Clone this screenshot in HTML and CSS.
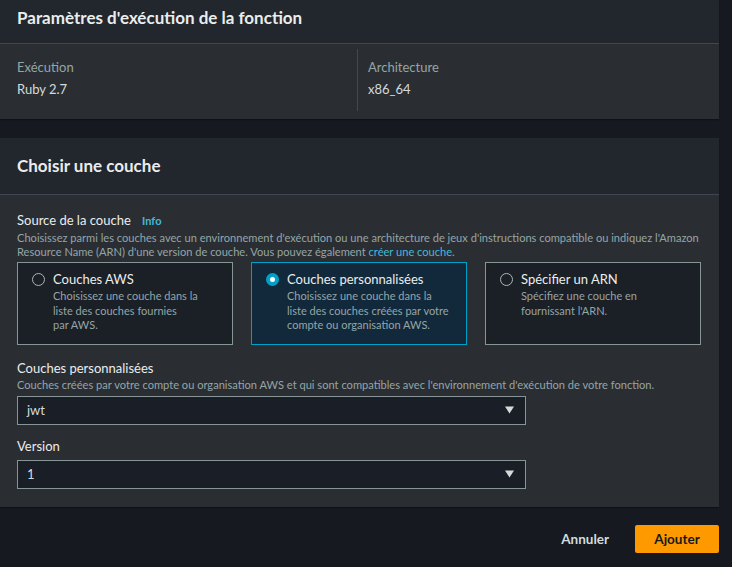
FILE: index.html
```html
<!DOCTYPE html>
<html lang="fr">
<head>
<meta charset="utf-8">
<title>Choisir une couche</title>
<link rel="stylesheet" href="styles.css">
</head>
<body>
<div class="page">
  <section class="panel">
    <div class="panel-head first">
      <h2 class="panel-title">Paramètres d'exécution de la fonction</h2>
    </div>
    <div class="panel-body kv">
      <div class="kv-col">
        <div class="kv-label">Exécution</div>
        <div class="kv-value">Ruby 2.7</div>
      </div>
      <div class="kv-col">
        <div class="kv-label">Architecture</div>
        <div class="kv-value">x86_64</div>
      </div>
    </div>
  </section>

  <section class="panel second">
    <div class="panel-head">
      <h2 class="panel-title">Choisir une couche</h2>
    </div>
    <div class="panel-body form">
      <div class="field-label">Source de la couche <a class="info">Info</a></div>
      <div class="field-desc">Choisissez parmi les couches avec un environnement d'exécution ou une architecture de jeux d'instructions compatible ou indiquez l'Amazon Resource Name (ARN) d'une version de couche. Vous pouvez également <a class="link">créer une couche</a>.</div>

      <div class="tiles">
        <div class="tile">
          <span class="radio"></span>
          <div class="tile-text">
            <div class="tile-title">Couches AWS</div>
            <div class="tile-desc">Choisissez une couche dans la<br>liste des couches fournies<br>par AWS.</div>
          </div>
        </div>
        <div class="tile selected">
          <span class="radio on"></span>
          <div class="tile-text">
            <div class="tile-title">Couches personnalisées</div>
            <div class="tile-desc">Choisissez une couche dans la<br>liste des couches créées par votre<br>compte ou organisation AWS.</div>
          </div>
        </div>
        <div class="tile">
          <span class="radio"></span>
          <div class="tile-text">
            <div class="tile-title">Spécifier un ARN</div>
            <div class="tile-desc">Spécifiez une couche en<br>fournissant l'ARN.</div>
          </div>
        </div>
      </div>

      <div class="field-label spaced">Couches personnalisées</div>
      <div class="field-desc">Couches créées par votre compte ou organisation AWS et qui sont compatibles avec l'environnement d'exécution de votre fonction.</div>
      <div class="select">
        <span>jwt</span>
        <svg class="caret" width="9" height="8" viewBox="0 0 9 8"><path d="M0 0.5h9L4.5 7.5z" fill="#d5dbdb"/></svg>
      </div>

      <div class="field-label spaced2">Version</div>
      <div class="select">
        <span>1</span>
        <svg class="caret" width="9" height="8" viewBox="0 0 9 8"><path d="M0 0.5h9L4.5 7.5z" fill="#d5dbdb"/></svg>
      </div>
    </div>
  </section>

  <div class="footer">
    <button class="btn-link">Annuler</button>
    <button class="btn-primary">Ajouter</button>
  </div>
</div>
</body>
</html>
```

FILE: styles.css
```css
* { box-sizing: border-box; }
html, body { margin: 0; padding: 0; }
body {
  background: #16191f;
  font-family: Lato, "Open Sans", sans-serif;
  color: #d5dbdb;
  width: 732px;
  height: 567px;
  overflow: hidden;
}
.page {
  width: 719px;
}
.panel {
  background: #2a2e33;
  box-shadow: 0 1px 1px rgba(0,0,0,0.3);
}
.panel.second { margin-top: 19px; }
.panel-head {
  background: #22262d;
  border-bottom: 1px solid #414750;
  padding: 16px 17px;
}
.panel-head.first {
  padding: 6px 17px 13px;
}
.panel-title {
  margin: 0;
  font-size: 17px;
  line-height: 24px;
  font-weight: 700;
  color: #eaeded;
}
.kv {
  display: flex;
  padding: 5px 0 8px;
}
.kv-col {
  width: 358px;
  padding: 8px 17px 10px;
}
.kv-col:first-child {
  border-right: 1px solid #414750;
}
.kv-col + .kv-col {
  padding-left: 10px;
}
.kv-label {
  font-size: 13px;
  line-height: 20px;
  color: #95a5a6;
}
.kv-value {
  font-size: 13px;
  line-height: 24px;
  color: #d5dbdb;
}
.form {
  padding: 15px 18px 18px 17px;
}
.field-label {
  font-size: 13px;
  line-height: 20px;
  color: #eaeded;
}
.field-label.spaced { margin-top: 13px; }
.field-label.spaced2 { margin-top: 11px; }
.info {
  color: #44b9d6;
  font-weight: 700;
  font-size: 11px;
  margin-left: 8px;
}
.field-desc {
  font-size: 11.1px;
  line-height: 13.5px;
  color: #95a5a6;
}
.link { color: #44b9d6; }
.tiles {
  display: grid;
  grid-template-columns: repeat(3, 1fr);
  gap: 18px;
  margin-top: 4px;
}
.tile {
  display: flex;
  gap: 8px;
  height: 83px;
  padding: 8px 14px 8px 14px;
  background: #1b1f26;
  border: 1px solid #879596;
}
.tile.selected {
  background: #12293b;
  border-color: #00a1c9;
}
.radio {
  flex: none;
  width: 13px;
  height: 13px;
  margin-top: 2px;
  border-radius: 50%;
  border: 1.5px solid #aab7b8;
}
.radio.on {
  border: 4px solid #00a1c9;
  background: #fff;
}
.tile-title {
  font-size: 13px;
  line-height: 16px;
  color: #eaeded;
}
.tile-desc {
  margin-top: 2px;
  font-size: 11px;
  line-height: 14.5px;
  color: #95a5a6;
}
.select {
  display: flex;
  align-items: center;
  justify-content: space-between;
  width: 509px;
  height: 29px;
  margin-top: 4px;
  padding: 0 11px 0 9px;
  background: #1a1f27;
  border: 1px solid #879596;
  font-size: 13px;
  color: #d5dbdb;
}
.caret { display: block; }
.footer {
  display: flex;
  justify-content: flex-end;
  align-items: center;
  gap: 26px;
  margin-top: 18px;
}
button {
  font-family: Lato, "Open Sans", sans-serif;
  font-weight: 700;
  font-size: 13.5px;
  cursor: pointer;
}
.btn-link {
  background: none;
  border: none;
  padding: 0;
  color: #d5dbdb;
}
.btn-primary {
  width: 84px;
  height: 28px;
  border: none;
  border-radius: 2px;
  background: #ff9900;
  color: #16191f;
}
```
